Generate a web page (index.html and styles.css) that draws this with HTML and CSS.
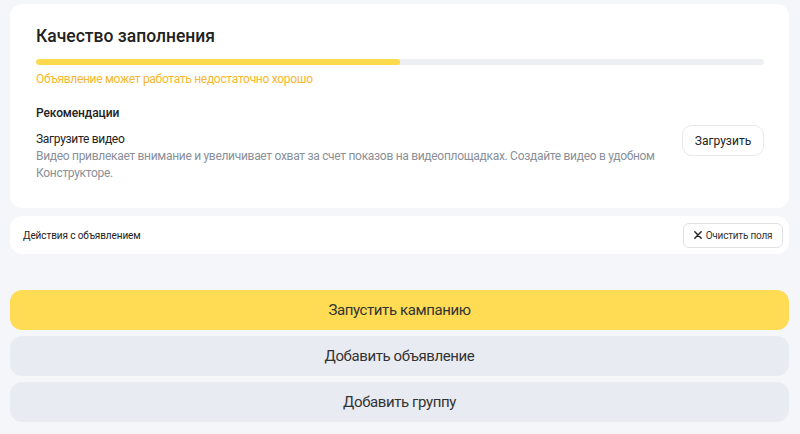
FILE: index.html
```html
<!DOCTYPE html>
<html lang="ru">
<head>
<meta charset="utf-8">
<title>Качество заполнения</title>
<link rel="stylesheet" href="styles.css">
</head>
<body>
<main class="page">
  <section class="card quality">
    <h2 class="title">Качество заполнения</h2>
    <div class="progress"><div class="progress-fill" style="width: 50%"></div></div>
    <p class="warning">Объявление может работать недостаточно хорошо</p>
    <h3 class="rec-title">Рекомендации</h3>
    <div class="rec">
      <div class="rec-text">
        <div class="rec-name">Загрузите видео</div>
        <p class="rec-desc">Видео привлекает внимание и увеличивает охват за счет показов на видеоплощадках. Создайте видео в удобном Конструкторе.</p>
      </div>
      <button class="btn-outline">Загрузить</button>
    </div>
  </section>
  <section class="card actions">
    <span class="actions-label">Действия с объявлением</span>
    <button class="btn-clear">
      <svg class="x-icon" width="8" height="8" viewBox="0 0 8 8"><path d="M0.8 0.8L7.2 7.2M7.2 0.8L0.8 7.2" stroke="#222" stroke-width="1.4" fill="none" stroke-linecap="round"/></svg>
      Очистить поля
    </button>
  </section>
  <div class="buttons">
    <button class="btn-big btn-yellow">Запустить кампанию</button>
    <button class="btn-big btn-grey">Добавить объявление</button>
    <button class="btn-big btn-grey">Добавить группу</button>
  </div>
</main>
</body>
</html>
```
FILE: styles.css
```css
* { box-sizing: border-box; }
html, body { margin: 0; padding: 0; }
body {
  background: #f5f6f9;
  font-family: Roboto, "Noto Sans", sans-serif;
  color: #222;
  width: 800px;
  height: 434px;
  overflow: hidden;
}
.page {
  padding: 4px 11px 0 10px;
  display: flex;
  flex-direction: column;
}
.card {
  background: #fff;
  border-radius: 12px;
}
.quality {
  padding: 21px 25px 24px 26px;
  height: 204px;
}
.title {
  margin: 0;
  font-size: 17.5px;
  line-height: 22px;
  font-weight: 500;
  color: #222;
}
.progress {
  margin-top: 12px;
  height: 6px;
  border-radius: 3px;
  background: #edeff3;
  overflow: hidden;
}
.progress-fill {
  height: 100%;
  background: #fdd94d;
  border-radius: 3px;
}
.warning {
  margin: 6px 0 0;
  font-size: 12px;
  line-height: 16px;
  letter-spacing: -0.3px;
  color: #f6b72a;
}
.rec-title {
  margin: 18px 0 0;
  font-size: 12px;
  line-height: 16px;
  font-weight: 500;
  letter-spacing: -0.1px;
}
.rec {
  margin-top: 10px;
  display: flex;
  align-items: flex-start;
  justify-content: space-between;
}
.rec-text {
  width: 636px;
  letter-spacing: -0.3px;
}
.rec-name {
  font-size: 12px;
  line-height: 17px;
}
.rec-desc {
  margin: 0;
  font-size: 12px;
  line-height: 17px;
  color: #8a8f99;
}
.btn-outline {
  margin-top: -6px;
  width: 82px;
  height: 31px;
  border: 1px solid #e6e8ee;
  border-radius: 10px;
  background: #fff;
  font-family: inherit;
  font-size: 12px;
  color: #222;
}
.actions {
  margin-top: 8px;
  height: 38px;
  padding: 0 6px 0 13px;
  display: flex;
  align-items: center;
  justify-content: space-between;
}
.actions-label {
  font-size: 10px;
  letter-spacing: -0.1px;
  color: #222;
}
.btn-clear {
  width: 100px;
  height: 25px;
  border: 1px solid #dfe1e6;
  border-radius: 6px;
  background: #fff;
  font-family: inherit;
  font-size: 10px;
  letter-spacing: -0.2px;
  color: #333;
  display: flex;
  align-items: center;
  justify-content: center;
  gap: 4px;
}
.buttons {
  margin-top: 36px;
  display: flex;
  flex-direction: column;
  gap: 6px;
}
.btn-big {
  height: 40px;
  border: 0;
  border-radius: 12px;
  font-family: inherit;
  font-size: 15px;
  letter-spacing: -0.4px;
  color: #333;
}
.btn-yellow { background: #ffdc54; }
.btn-grey { background: #e9ebf2; }
```
